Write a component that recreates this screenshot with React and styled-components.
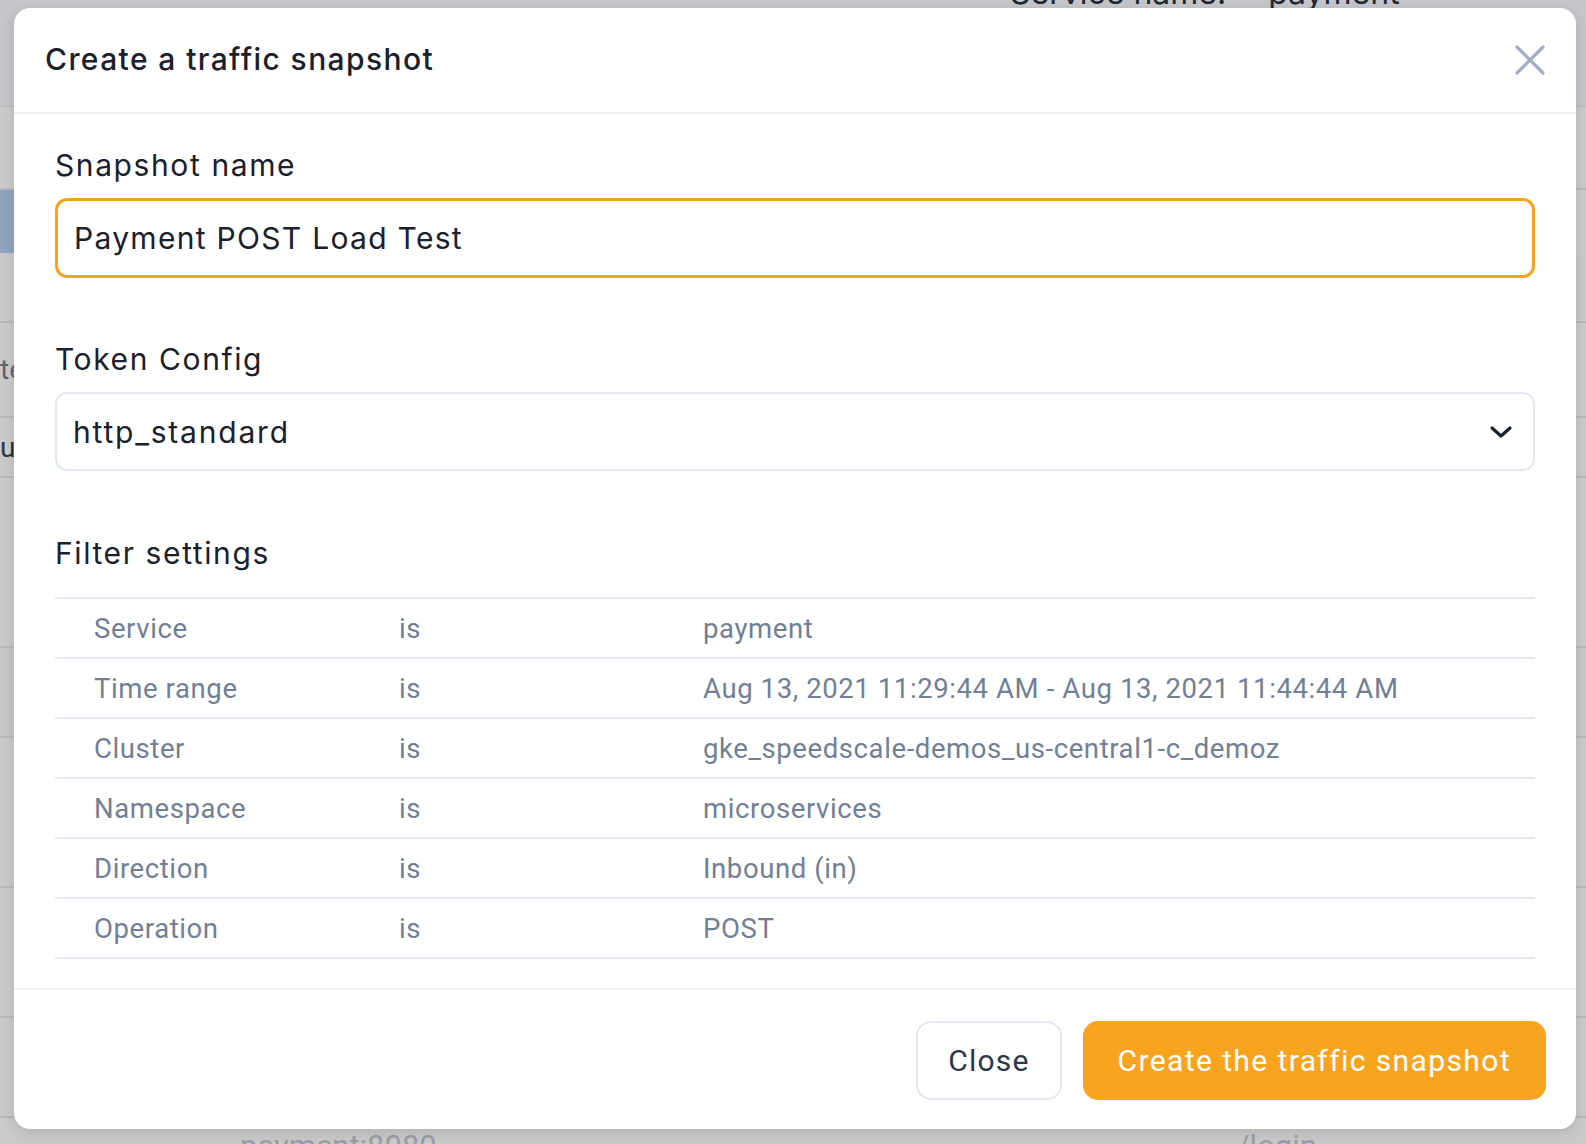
import React from "react";
import styled, { createGlobalStyle } from "styled-components";

const GlobalStyle = createGlobalStyle`
  html, body {
    margin: 0;
    padding: 0;
    background: #c9c9c9;
  }
  * { box-sizing: border-box; }
`;

const Page = styled.div`
  position: relative;
  width: 1586px;
  height: 1144px;
  overflow: hidden;
  background: #cacaca;
  font-family: Inter, "Noto Sans", sans-serif;
`;

// faded page behind the overlay
const Under = styled.div`
  display: flex;
  flex-direction: column;
  height: 100%;
`;

const UnderTop = styled.div`
  height: 107px;
  flex-shrink: 0;
  background: #c5c6ca;
  display: flex;
  align-items: flex-start;
  gap: 42px;
  padding: 0 0 0 1010px;
  border-bottom: 2px solid #bfc0c4;
  overflow: hidden;
`;

const UnderText = styled.span`
  margin-top: -22px;
  font-size: 32px;
  line-height: 30px;
  color: #1f2733;
`;

const UnderRow = styled.div`
  height: ${(p) => p.h}px;
  flex-shrink: 0;
  background: ${(p) => p.bg || "transparent"};
  border-bottom: ${(p) => (p.line ? "2px solid #b9b9bb" : "none")};
  display: flex;
  align-items: ${(p) => (p.top ? "flex-start" : "center")};
  padding-top: ${(p) => (p.top ? 10 : 0)}px;
  padding-left: ${(p) => p.pl || 0}px;
  gap: ${(p) => p.gap || 0}px;
  font-family: Roboto, sans-serif;
  font-size: ${(p) => p.fs || 28}px;
  color: ${(p) => p.color || "#5d6673"};
`;

const SideBlock = styled.div`
  width: 40px;
  height: 100%;
  background: #8fa5c0;
`;

const Modal = styled.div`
  position: absolute;
  top: 8px;
  left: 14px;
  width: 1562px;
  height: 1121px;
  background: #fff;
  border-radius: 16px;
  box-shadow: 0 4px 14px rgba(0, 0, 0, 0.12);
  display: flex;
  flex-direction: column;
  color: #1a202c;
`;

const Header = styled.div`
  height: 106px;
  flex-shrink: 0;
  display: flex;
  align-items: center;
  justify-content: space-between;
  padding: 0 30px 0 31px;
  border-bottom: 2px solid #edf2f7;
`;

const Title = styled.h2`
  margin: 0;
  margin-top: -3px;
  font-size: 30px;
  font-weight: 500;
  letter-spacing: 1.4px;
`;

const CloseIcon = styled.button`
  border: none;
  background: none;
  padding: 0;
  width: 32px;
  height: 32px;
  display: flex;
  align-items: center;
  justify-content: center;
  cursor: pointer;
`;

const Body = styled.div`
  flex: 1;
  padding: 33px 41px 0 41px;
  display: flex;
  flex-direction: column;
`;

const Label = styled.div`
  font-size: 30px;
  line-height: 36px;
  font-weight: 400;
  letter-spacing: 1.6px;
  margin-top: ${(p) => p.mt || 0}px;
  margin-bottom: ${(p) => p.mb || 15}px;
`;

const TextInput = styled.input`
  width: 100%;
  height: 80px;
  border: 3px solid #f8a31f;
  border-radius: 12px;
  padding: 0 16px;
  font-family: Inter, "Noto Sans", sans-serif;
  font-size: 30px;
  letter-spacing: 1.3px;
  color: #1a202c;
  outline: none;
`;

const Select = styled.div`
  width: 100%;
  height: 79px;
  border: 2px solid #e2e8f0;
  border-radius: 12px;
  padding: 0 20px 0 16px;
  display: flex;
  align-items: center;
  justify-content: space-between;
  font-size: 30px;
  letter-spacing: 1.8px;
`;

const Table = styled.div`
  border-top: 2px solid #e2e8f0;
`;

const Row = styled.div`
  display: grid;
  grid-template-columns: 305px 304px 1fr;
  align-items: center;
  height: 60px;
  padding-left: 39px;
  border-bottom: 2px solid #e2e8f0;
  font-family: Roboto, sans-serif;
  font-size: 27.5px;
  letter-spacing: 0.6px;
  color: #718096;
`;

const Footer = styled.div`
  height: 141px;
  flex-shrink: 0;
  border-top: 2px solid #edf2f7;
  display: flex;
  justify-content: flex-end;
  align-items: flex-start;
  gap: 21px;
  padding: 31px 30px 0 0;
`;

const Button = styled.button`
  height: 79px;
  padding: 0 ${(p) => (p.primary ? 33 : 30)}px;
  border-radius: 15px;
  border: 2px solid ${(p) => (p.primary ? "#f9a41f" : "#e2e8f0")};
  background: ${(p) => (p.primary ? "#f9a41f" : "#fff")};
  color: ${(p) => (p.primary ? "#fff" : "#2d3748")};
  font-family: Roboto, sans-serif;
  font-size: 30px;
  font-weight: 400;
  letter-spacing: ${(p) => (p.primary ? 1.4 : 1.2)}px;
  cursor: pointer;
`;

const filters = [
  ["Service", "is", "payment"],
  ["Time range", "is", "Aug 13, 2021 11:29:44 AM - Aug 13, 2021 11:44:44 AM"],
  ["Cluster", "is", "gke_speedscale-demos_us-central1-c_demoz"],
  ["Namespace", "is", "microservices"],
  ["Direction", "is", "Inbound (in)"],
  ["Operation", "is", "POST"],
];

export default function App() {
  return (
    <Page>
      <GlobalStyle />
      <Under>
        <UnderTop>
          <UnderText>Service name:</UnderText>
          <UnderText>payment</UnderText>
        </UnderTop>
        <UnderRow h={83} line />
        <UnderRow h={63}>
          <SideBlock />
        </UnderRow>
        <UnderRow h={70} line bg="#c9c9cb" />
        <UnderRow h={95} line>te</UnderRow>
        <UnderRow h={60} line color="#2d3440">u</UnderRow>
        <UnderRow h={170} line />
        <UnderRow h={90} line bg="#c7c7ca" />
        <UnderRow h={150} line />
        <UnderRow h={130} line />
        <UnderRow h={100} line />
        <UnderRow h={60} top pl={240} gap={800} fs={31} color="#9a9ea5">
          <span>payment:8080</span>
          <span>/login</span>
        </UnderRow>
      </Under>

      <Modal>
        <Header>
          <Title>Create a traffic snapshot</Title>
          <CloseIcon aria-label="close">
            <svg width="30" height="30" viewBox="0 0 30 30">
              <path
                d="M2 2 L28 28 M28 2 L2 28"
                stroke="#a0aec0"
                strokeWidth="3.2"
                strokeLinecap="round"
              />
            </svg>
          </CloseIcon>
        </Header>
        <Body>
          <Label>Snapshot name</Label>
          <TextInput defaultValue="Payment POST Load Test" />
          <Label mt={63}>Token Config</Label>
          <Select>
            <span>http_standard</span>
            <svg width="24" height="16" viewBox="0 0 24 16">
              <path
                d="M3 4 L12 12 L21 4"
                fill="none"
                stroke="#1a202c"
                strokeWidth="3.2"
                strokeLinecap="round"
                strokeLinejoin="round"
              />
            </svg>
          </Select>
          <Label mt={64} mb={26}>Filter settings</Label>
          <Table>
            {filters.map((f) => (
              <Row key={f[0]}>
                <span>{f[0]}</span>
                <span>{f[1]}</span>
                <span>{f[2]}</span>
              </Row>
            ))}
          </Table>
        </Body>
        <Footer>
          <Button>Close</Button>
          <Button primary>Create the traffic snapshot</Button>
        </Footer>
      </Modal>
    </Page>
  );
}
